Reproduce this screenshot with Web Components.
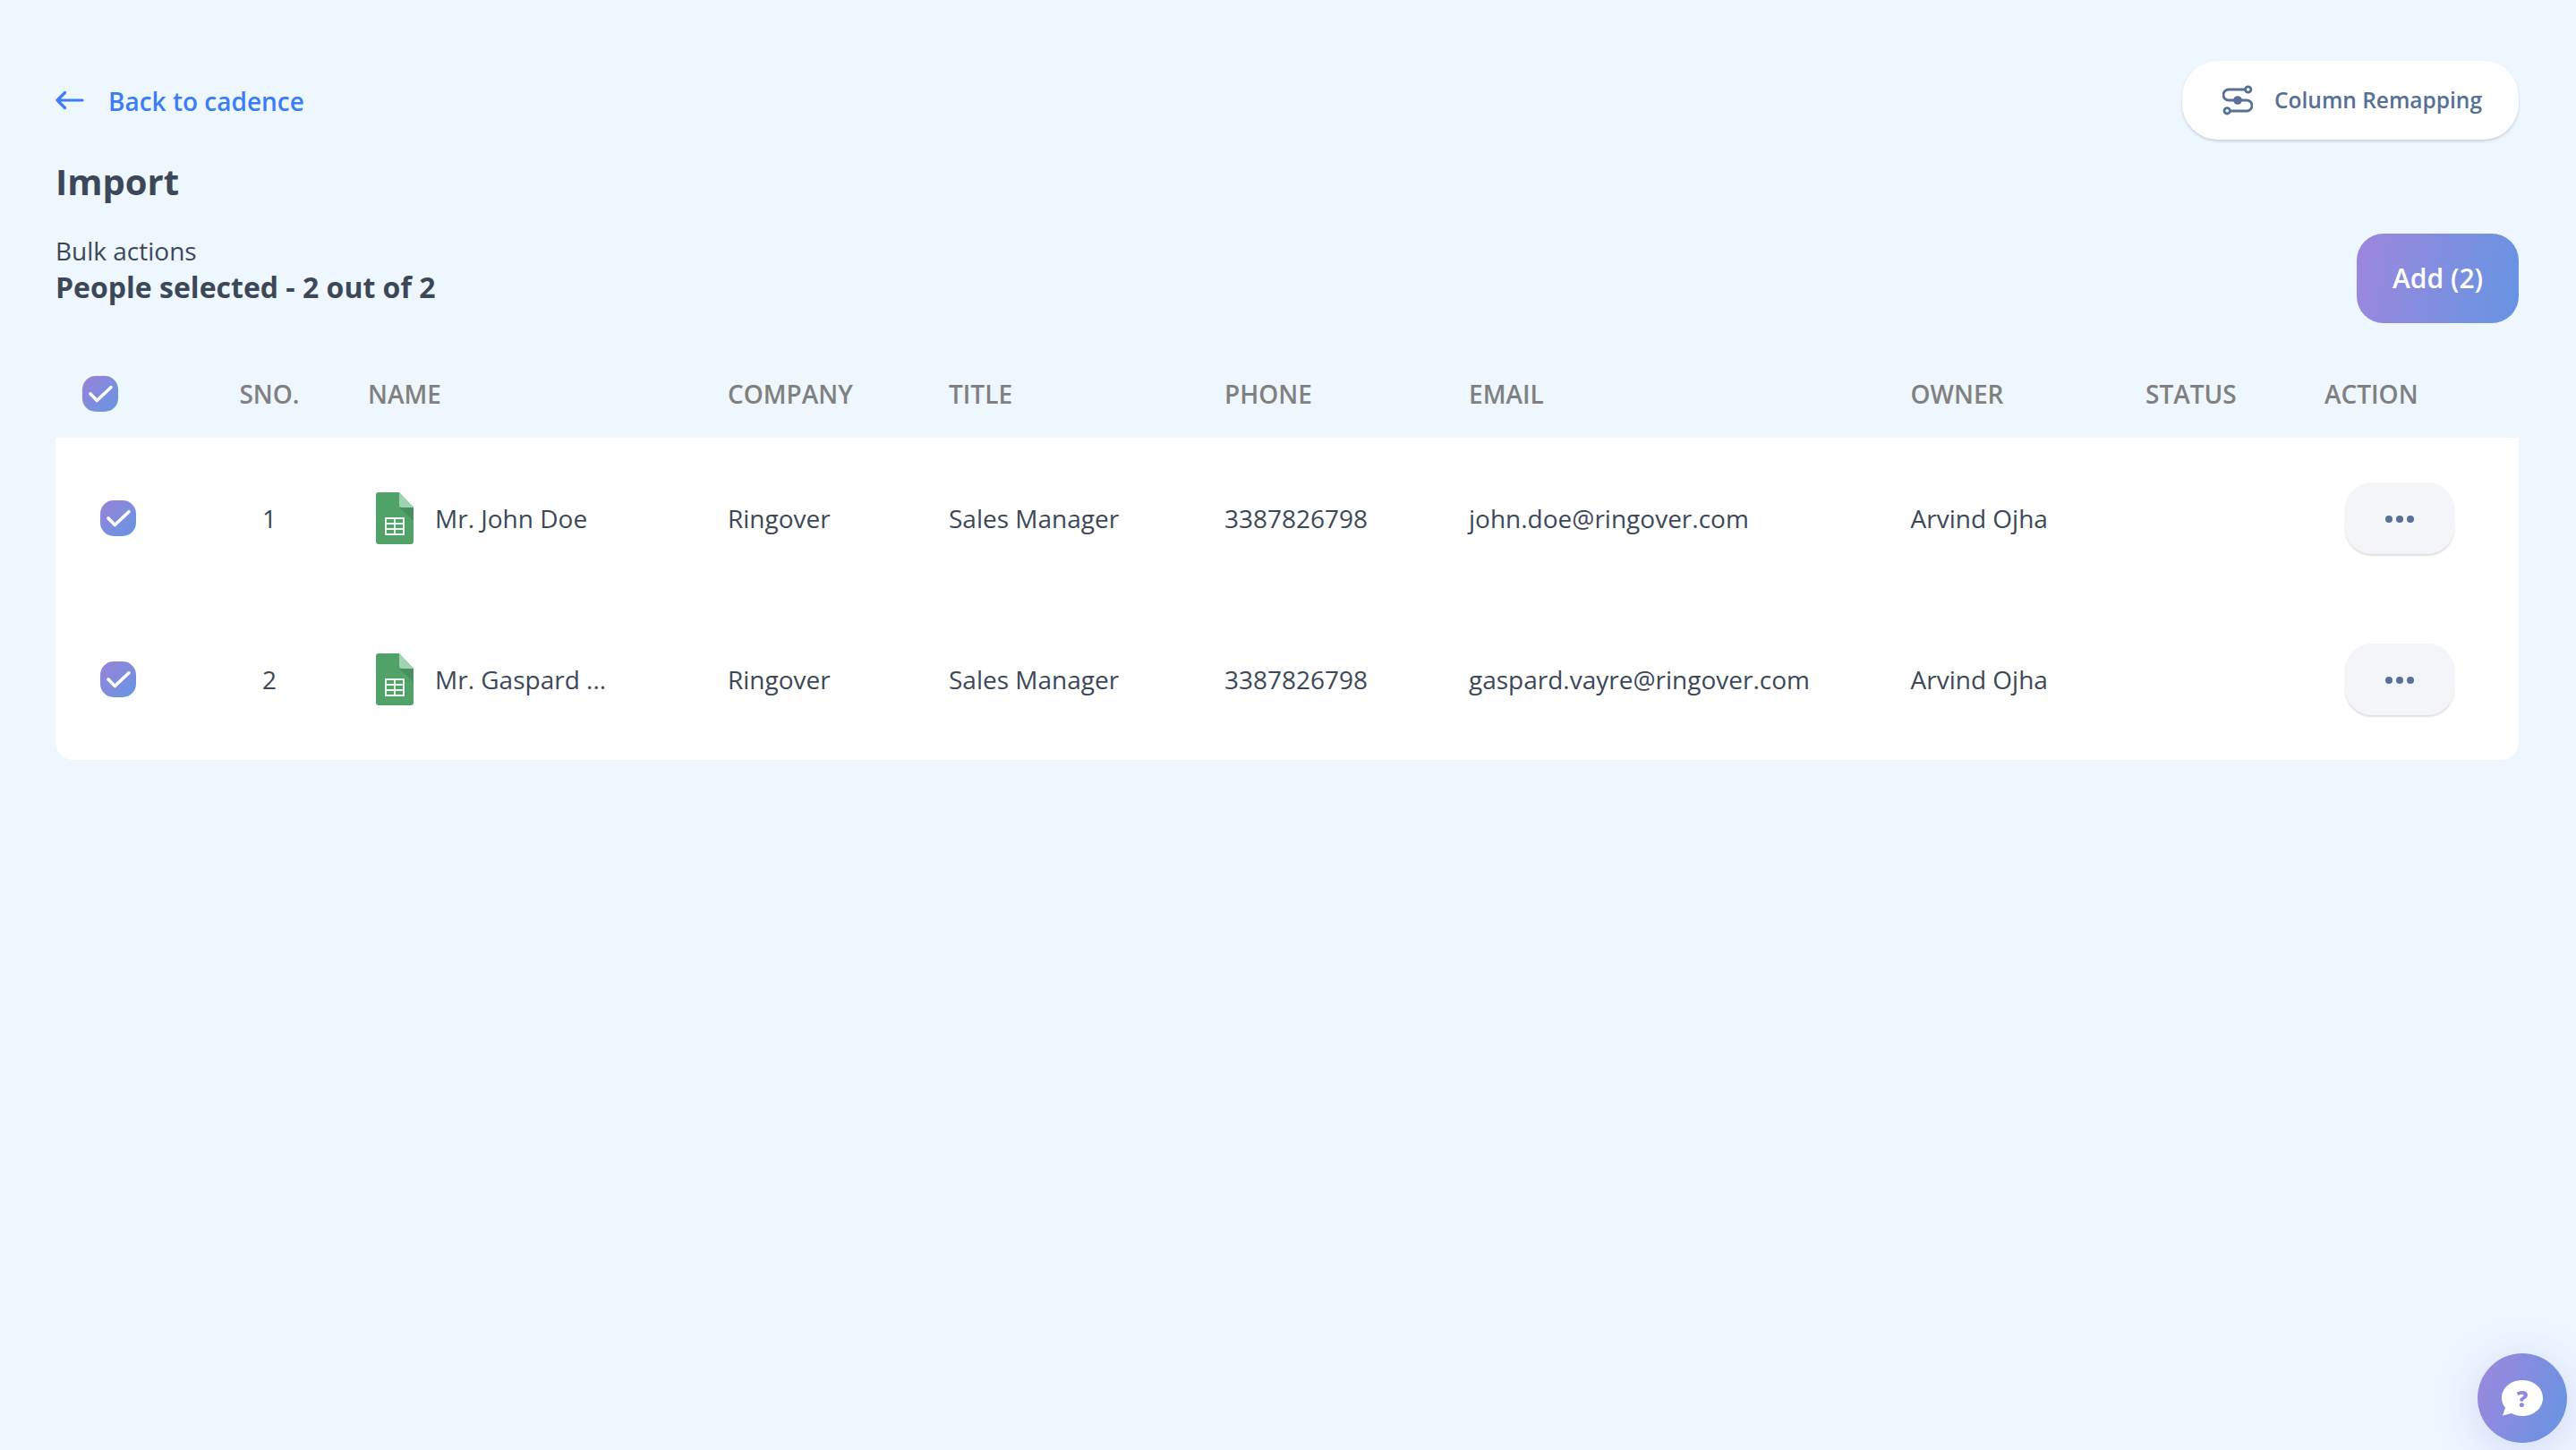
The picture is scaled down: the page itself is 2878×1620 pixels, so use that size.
<!DOCTYPE html>
<html lang="en">
<head>
<meta charset="utf-8">
<title>Import</title>
<style>
html,body{margin:0;padding:0;height:100%;background:#eef6fe;}
body{font-family:"Open Sans",sans-serif;color:#3c4858;}
</style>
</head>
<body>
<import-page>
  <page-top>
    <back-link slot="left">Back to cadence</back-link>
    <pill-button slot="right">Column Remapping</pill-button>
  </page-top>
  <page-title>Import</page-title>
  <bulk-bar>
    <span slot="label">Bulk actions</span>
    <span slot="count">People selected - 2 out of 2</span>
    <add-button slot="action">Add (2)</add-button>
  </bulk-bar>
  <people-table>
    <table-head></table-head>
    <person-row sno="1" name="Mr. John Doe" company="Ringover" job="Sales Manager" phone="3387826798" email="john.doe@ringover.com" owner="Arvind Ojha"></person-row>
    <person-row sno="2" name="Mr. Gaspard ..." company="Ringover" job="Sales Manager" phone="3387826798" email="gaspard.vayre@ringover.com" owner="Arvind Ojha"></person-row>
  </people-table>
</import-page>
<help-fab></help-fab>
<script>
const COLS = '129px 220px 402px 247px 308px 273px 493.5px 262.5px 200px 1fr';
function el(name, css, html){
  customElements.define(name, class extends HTMLElement{
    constructor(){super();this.attachShadow({mode:'open'}).innerHTML='<style>'+css+'</style>'+html;}
  });
}
el('import-page', ':host{display:block;padding:68px 64px 0 62px;}', '<slot></slot>');
el('page-top', ':host{display:flex;justify-content:space-between;align-items:center;height:88px;}', '<slot name="left"></slot><slot name="right"></slot>');
el('back-link', ':host{display:flex;align-items:center;gap:27px;color:#3b7df5;font:600 28px/40px "Open Sans",sans-serif;}svg{display:block}span{position:relative;top:1px}',
  '<svg width="32" height="24" viewBox="0 0 32 24" fill="none" stroke="#3b7df5" stroke-width="3.2" stroke-linecap="round" stroke-linejoin="round"><path d="M2 12H30M10.500 3.500L2 12L10.500 20.500"/></svg><span><slot></slot></span>');
el('pill-button', ':host{display:flex;align-items:center;box-sizing:border-box;width:376px;height:88px;padding-left:45px;gap:24px;background:#fff;border-radius:40px;box-shadow:0 2px 3px rgba(60,72,88,.2);color:#567096;font:600 24.5px/36px "Open Sans",sans-serif;}svg{display:block;flex:none}',
  '<svg width="34" height="34" viewBox="0 0 34 34" fill="none" stroke="#567096" stroke-width="2.8" stroke-linecap="round"><path d="M24.7 5H7a6 6 0 0 0 0 12H27a6 6 0 0 1 0 12H9"/><circle cx="28.7" cy="5" r="3.2"/><circle cx="5.2" cy="28.8" r="3.2"/><circle cx="17" cy="17" r="4.8" fill="#567096" stroke="none"/></svg><span><slot></slot></span>');
el('page-title', ':host{display:block;margin-top:22px;font:700 40px/50px "Open Sans",sans-serif;color:#3c4858;}', '<slot></slot>');
el('bulk-bar', ':host{display:flex;justify-content:space-between;align-items:flex-start;margin-top:33px;}.l{font:400 28px/40px "Open Sans",sans-serif;color:#3c4858;margin-top:-1px}.c{font:700 32px/44px "Open Sans",sans-serif;color:#3c4858;margin-top:-1px}',
  '<div><div class="l"><slot name="label"></slot></div><div class="c"><slot name="count"></slot></div></div><slot name="action"></slot>');
el('add-button', ':host{display:flex;align-items:center;justify-content:center;width:181px;height:100px;border-radius:30px;background:linear-gradient(100deg,#9d87dd,#6694e2);color:#fff;font:600 30px/40px "Open Sans",sans-serif;}', '<slot></slot>');
el('check-box', ':host{display:block;width:40px;height:40px;border-radius:15px;background:linear-gradient(135deg,#9a82d8,#6496e2);}svg{display:block}',
  '<svg width="40" height="40" viewBox="0 0 40 40" fill="none" stroke="#fff" stroke-width="3.6" stroke-linecap="round" stroke-linejoin="round"><path d="M9 20L16.3 27.5L32 12.7"/></svg>');
el('people-table', ':host{display:block;margin-top:30px;}::slotted(person-row){background:#fff}::slotted(person-row:nth-of-type(2)){border-radius:0 0 20px 20px}', '<slot></slot>');
el('table-head', ':host{display:grid;grid-template-columns:'+COLS+';height:98px;align-items:center;color:#808080;font:600 28px/40px "Open Sans",sans-serif;}.chk{padding-left:30px}.s{text-align:center}',
  '<div class="chk"><check-box></check-box></div><div class="s">SNO.</div><div>NAME</div><div>COMPANY</div><div>TITLE</div><div>PHONE</div><div>EMAIL</div><div>OWNER</div><div>STATUS</div><div>ACTION</div>');
el('sheet-icon', ':host{display:block;width:42px;height:58px}svg{display:block}',
  '<svg width="42" height="58" viewBox="0 0 42 58"><path d="M3 0H26L42 17V55a3 3 0 0 1-3 3H3a3 3 0 0 1-3-3V3a3 3 0 0 1 3-3Z" fill="#51a268"/><path d="M26 17L42 32V17Z" fill="#478f5e"/><path d="M26 0L42 17H29a3 3 0 0 1-3-3Z" fill="#a1d3b2"/><rect x="10" y="28" width="22" height="20" fill="#eef5f0"/><g fill="#51a268"><rect x="12" y="30" width="8" height="4"/><rect x="22" y="30" width="8" height="4"/><rect x="12" y="36" width="8" height="4"/><rect x="22" y="36" width="8" height="4"/><rect x="12" y="42" width="8" height="4"/><rect x="22" y="42" width="8" height="4"/></g></svg>');
el('more-button', ':host{display:flex;align-items:center;justify-content:center;gap:4px;width:122px;height:80px;border-radius:30px;background:#f3f5f8;box-shadow:0 2px 2px rgba(0,0,0,.13);}i{display:block;width:8px;height:8px;border-radius:50%;background:#567096;position:relative;top:1px}', '<i></i><i></i><i></i>');
customElements.define('person-row', class extends HTMLElement{
  constructor(){
    super();
    const g=n=>this.getAttribute(n);
    this.attachShadow({mode:'open'}).innerHTML='<style>:host{display:grid;grid-template-columns:'+COLS+';height:180px;align-items:center;color:#3c4858;font:400 28px/40px "Open Sans",sans-serif;}.chk{padding-left:50px}.s{text-align:center}.n{display:flex;align-items:center;gap:24px;padding-left:9px}.a{padding-left:23px}</style>'
      +'<div class="chk"><check-box></check-box></div><div class="s">'+g('sno')+'</div><div class="n"><sheet-icon></sheet-icon><span>'+g('name')+'</span></div><div>'+g('company')+'</div><div>'+g('job')+'</div><div>'+g('phone')+'</div><div>'+g('email')+'</div><div>'+g('owner')+'</div><div></div><div class="a"><more-button></more-button></div>';
  }
});
el('help-fab', ':host{position:fixed;right:10px;bottom:8px;width:100px;height:100px;border-radius:50%;background:linear-gradient(110deg,#9d87dd,#6694e2);box-shadow:0 8px 50px rgba(102,120,226,.22);}svg{display:block}',
  '<svg width="100" height="100" viewBox="0 0 100 100"><path d="M50 30C62.800 30 73 38.500 73 50C73 61.500 62.800 70 50 70C45.500 70 41.500 69 38 67L28 69.500L31 60.500C28.400 57.500 27 54 27 50C27 38.500 37.200 30 50 30Z" fill="#fff"/><text x="50" y="60" text-anchor="middle" fill="#8a8ade" font-family="Open Sans" font-weight="800" font-size="25">?</text></svg>');
</script>
</body>
</html>
